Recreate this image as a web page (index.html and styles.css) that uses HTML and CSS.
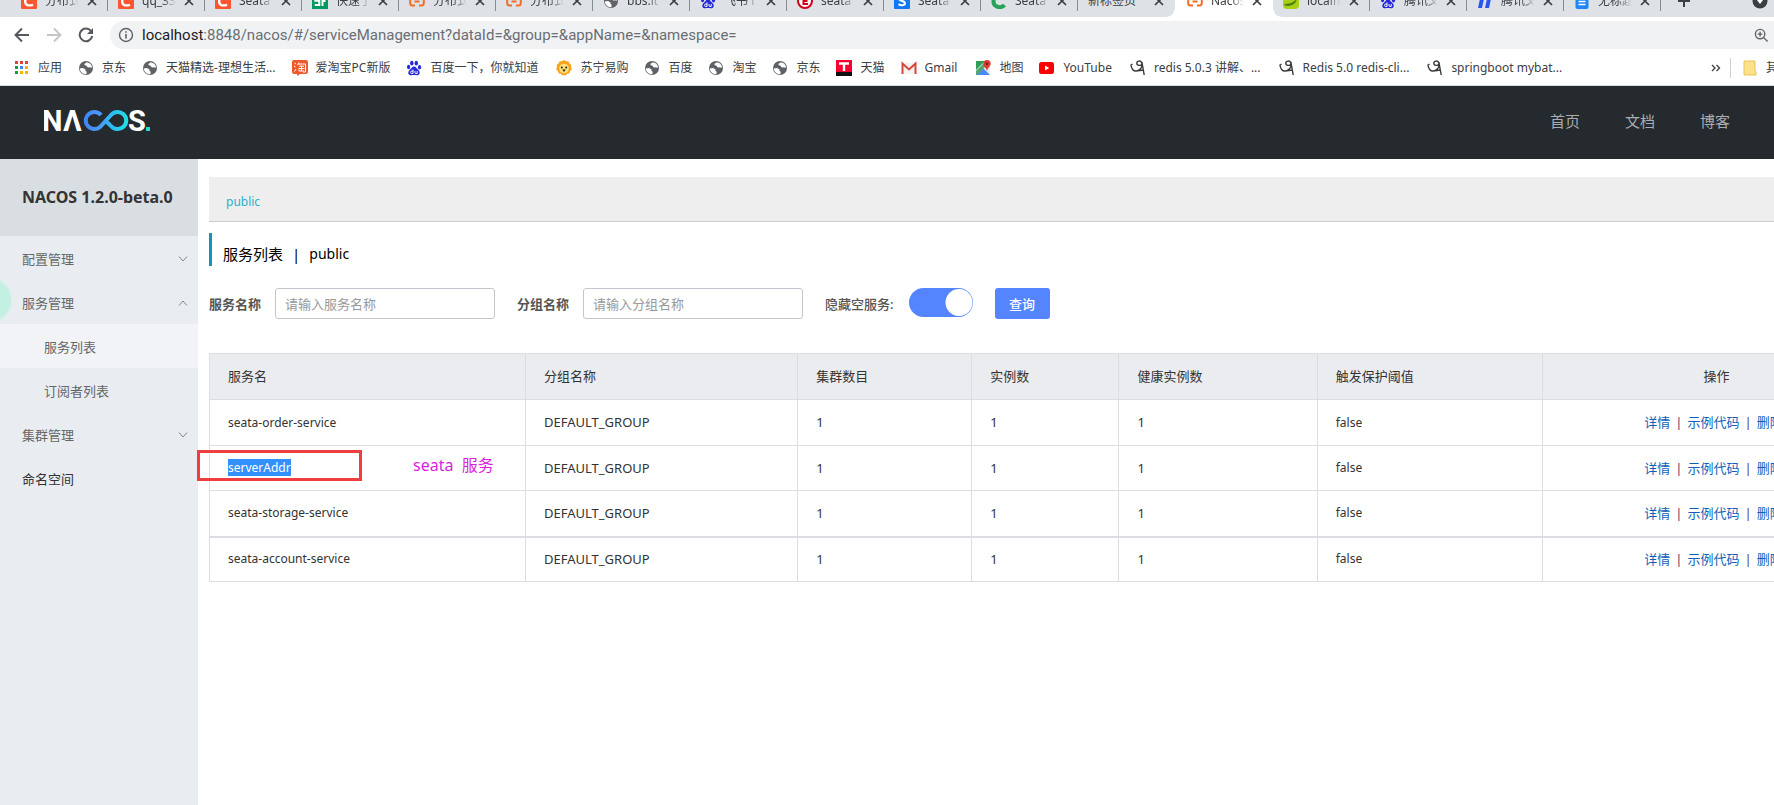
FILE: index.html
```html
<!DOCTYPE html>
<html lang="zh-CN">
<head>
<meta charset="utf-8">
<title>Nacos</title>
<link rel="stylesheet" href="styles.css">
</head>
<body>
<svg class="sprite" aria-hidden="true">
  <defs>
    <linearGradient id="loop" gradientUnits="userSpaceOnUse" x1="39" y1="0" x2="84" y2="0"><stop offset="0" stop-color="#3f83f3"/><stop offset="0.4" stop-color="#4a9bf8"/><stop offset="0.6" stop-color="#2fb8f2"/><stop offset="1" stop-color="#20e0e4"/></linearGradient>
  </defs>
  <symbol id="globe" viewBox="0 0 16 16"><circle cx="8" cy="8" r="7" fill="#5f6368"/><path d="M1.800 8.500 5 8l2.500 1.500V11l1.200.8-.4 2.400C5 14.500 2 12 1.800 8.500zM8.500 2.500c-1 .8-2.500 1-2 2.200.5 1 2.200.3 2.400 1.500.2 1 1.300 1.500 2.500 1l2.600.6C14 4.600 11.500 2.300 8.500 2.500z" fill="#fff"/></symbol>
  <symbol id="close" viewBox="0 0 10 10"><path d="M1 1l8 8M9 1l-8 8" stroke="#3c4043" stroke-width="1.700" fill="none"/></symbol>
  <symbol id="csdn" viewBox="0 0 16 16"><rect width="16" height="16" rx="1" fill="#fc5531"/><path d="M12 4.500C8 2.500 4.500 4 4.200 8c-.3 4.500 3.500 5 7.800 3.800" stroke="#fff" stroke-width="2.400" fill="none"/></symbol>
  <symbol id="sf" viewBox="0 0 16 16"><rect width="16" height="16" fill="#009a61"/><path d="M7.500 4.500H3.300v3.300h4v4.200H2.800M10.500 13V4h3.500M10 8h3.500" stroke="#fff" stroke-width="2" fill="none"/></symbol>
  <symbol id="nac" viewBox="0 0 16 16"><path d="M6 3H3.500Q1.200 3 1.200 5.500v4.500Q1.200 12.600 3.500 12.600H6M10 3h2.500q2.300 0 2.300 2.500v4.500q0 2.600-2.300 2.600H10M5.500 8.500h5" stroke="#f26f21" stroke-width="2" fill="none"/></symbol>
  <symbol id="paw" viewBox="0 0 16 16"><g fill="#2529d8"><ellipse cx="5.800" cy="3.200" rx="1.700" ry="2.400"/><ellipse cx="10.300" cy="3.200" rx="1.700" ry="2.400"/><ellipse cx="2.600" cy="7" rx="1.600" ry="2.200"/><ellipse cx="13.500" cy="7.200" rx="1.600" ry="2.200"/><path d="M8 6.500c2 0 2.600 2 4.400 3.600 2.200 2 1.400 5-.8 5.100-1.600.1-2.200-.2-3.600-.2s-2 .3-3.600.2c-2.200-.1-3-3.100-.8-5.100C5.400 8.500 6 6.500 8 6.500z"/></g><path d="M7 9.500v4H5.600q-1 0-1-1.200t1-1.200H7M9 11v1.500q0 1 1 1h1.200V11" stroke="#fff" fill="none"/></symbol>
  <symbol id="red" viewBox="0 0 16 16"><circle cx="8" cy="8" r="7" fill="#fff" stroke="#d0021b" stroke-width="2"/><path d="M11 5H6.500v6H11M6.500 8h4" stroke="#d0021b" stroke-width="2" fill="none"/></symbol>
  <symbol id="sea" viewBox="0 0 16 16"><rect width="16" height="16" rx="1" fill="#0f78f7"/><path d="M11.500 4.500C9 3 5 3.500 5 5.800c0 2.700 6 1.700 6 4.500 0 2.200-4 2.500-6.500.8" stroke="#fff" stroke-width="2" fill="none"/></symbol>
  <symbol id="grn" viewBox="0 0 16 16"><path d="M13 4C10 1 3 2 2.500 8s7.500 8 11 4" stroke="#27a35a" stroke-width="4" fill="none"/></symbol>
  <symbol id="leaf" viewBox="0 0 16 16"><rect width="16" height="16" rx="4" fill="#a8d014"/><path d="M1 11c5 0 10-1 13-6-.5 6-6 9-12 7.500z" fill="#4d7f14"/></symbol>
  <symbol id="bars" viewBox="0 0 16 16"><path d="M4 1h4L5 15H1zM11 1h4l-3 14H8z" fill="#2b55f0"/></symbol>
  <symbol id="doc" viewBox="0 0 16 16"><path d="M1.500 0h13v14a2 2 0 0 1-2 2h-9a2 2 0 0 1-2-2z" fill="#1e86f7"/><path d="M4.500 8.500h7M4.500 11.500h7" stroke="#fff" stroke-width="1.400"/></symbol>
  <symbol id="tao" viewBox="0 0 16 16"><path d="M2 0h12a2 2 0 0 1 2 2v10a2 2 0 0 1-2 2H8l-2.500 2L5 14H2a2 2 0 0 1-2-2V2a2 2 0 0 1 2-2z" fill="#ee5a2e"/><path d="M2.500 3l1.500 1M2 6l1.500 1M2.500 11.500 4 9M7 2.500 5.500 5M6 4h7.500v8H11M7 6.200h5M6.500 8.500h6M9.500 6v5M7 9.500V11h5" stroke="#fff" fill="none"/></symbol>
  <symbol id="lion" viewBox="0 0 16 16"><path d="M8 0l2 1.200 2.300 0 1 2.100L15.300 5l-.2 2.300.7 2.200-1.700 1.600-.6 2.200-2.300.5L9.500 15.500 8 15l-1.500.5-1.700-1.700-2.300-.5-.6-2.200L.2 9.500l.7-2.200L.7 5l2-1.700 1-2.100L6 1.200z" fill="#f9a21a"/><circle cx="8" cy="8.500" r="4.800" fill="#ffe07a"/><circle cx="5.800" cy="7.500" r="1" fill="#222"/><circle cx="10.200" cy="7.500" r="1" fill="#222"/><path d="M6.300 9.500h3.400L8 12z" fill="#222"/></symbol>
  <symbol id="tmall" viewBox="0 0 16 16"><rect width="16" height="16" fill="#f5002f"/><rect y="12" width="16" height="4" fill="#111"/><path d="M3 3.500h10M8 3.500V11" stroke="#fff" stroke-width="2.400"/></symbol>
  <symbol id="gmail" viewBox="0 0 16 16"><path d="M1 3h14v11H1z" fill="#f3f3f3"/><path d="M1.500 14V3.500L8 9.500l6.500-6V14" stroke="#d8463b" stroke-width="2" fill="none"/></symbol>
  <symbol id="map" viewBox="0 0 16 16"><rect x="1" y="1" width="14" height="14" rx="1" fill="#e8eaed"/><path d="M1 1h9L1 10z" fill="#2da15a"/><path d="M1 15 8 8l7 7z" fill="#4a8af4"/><path d="M1 11l8-8 2 3-9 9H1z" fill="#55a66a"/><path d="M12 0a3.700 3.700 0 0 1 3.700 3.700C15.700 6.300 12.600 8 12 11c-.6-3-3.700-4.700-3.700-7.300A3.700 3.700 0 0 1 12 0z" fill="#dc3e35"/><circle cx="12" cy="3.700" r="1.300" fill="#7b1b15"/></symbol>
  <symbol id="yt" viewBox="0 0 16 16"><rect x="0" y="2" width="15" height="12" rx="2.500" fill="#f00"/><path d="M6 5.500v5L10.300 8z" fill="#fff"/></symbol>
  <symbol id="loopy" viewBox="0 0 16 16"><path d="M1 4.500c0 4 2.500 7 5.500 6.500 4-.7 6.300-4.500 5.300-8C11 .3 6.800.5 6.800 3.200c0 2.500 4 3 5.400.6L14.200 15M.5 5.500 2.500 4M6 11l7.500-1" stroke="#3a3a3a" stroke-width="1.400" fill="none"/></symbol>
  <symbol id="down" viewBox="0 0 10 10"><path d="M1 2.500 5 7l4-4.500" stroke="#888" fill="none"/></symbol>
  <symbol id="up" viewBox="0 0 10 10"><path d="M1 7.500 5 3l4 4.500" stroke="#888" fill="none"/></symbol>
</svg>

<div class="browser">
  <div class="tabs">
    <div class="tab"><svg class="ico"><use href="#csdn"/></svg><span>分布式</span><svg class="x"><use href="#close"/></svg></div>
    <div class="tab"><svg class="ico"><use href="#csdn"/></svg><span>qq_33</span><svg class="x"><use href="#close"/></svg></div>
    <div class="tab"><svg class="ico"><use href="#csdn"/></svg><span>Seata</span><svg class="x"><use href="#close"/></svg></div>
    <div class="tab"><svg class="ico"><use href="#sf"/></svg><span>快速了</span><svg class="x"><use href="#close"/></svg></div>
    <div class="tab"><svg class="ico"><use href="#nac"/></svg><span>分布式</span><svg class="x"><use href="#close"/></svg></div>
    <div class="tab"><svg class="ico"><use href="#nac"/></svg><span>分布式</span><svg class="x"><use href="#close"/></svg></div>
    <div class="tab"><svg class="ico"><use href="#globe"/></svg><span>bbs.it</span><svg class="x"><use href="#close"/></svg></div>
    <div class="tab"><svg class="ico"><use href="#paw"/></svg><span>飞书 f</span><svg class="x"><use href="#close"/></svg></div>
    <div class="tab"><svg class="ico"><use href="#red"/></svg><span>seata</span><svg class="x"><use href="#close"/></svg></div>
    <div class="tab"><svg class="ico"><use href="#sea"/></svg><span>Seata</span><svg class="x"><use href="#close"/></svg></div>
    <div class="tab"><svg class="ico"><use href="#grn"/></svg><span>Seata</span><svg class="x"><use href="#close"/></svg></div>
    <div class="tab last"><span>新标签页</span><svg class="x"><use href="#close"/></svg></div>
    <div class="tab active"><svg class="ico"><use href="#nac"/></svg><span>Nacos</span><svg class="x"><use href="#close"/></svg></div>
    <div class="tab first"><svg class="ico"><use href="#leaf"/></svg><span>localh</span><svg class="x"><use href="#close"/></svg></div>
    <div class="tab"><svg class="ico"><use href="#paw"/></svg><span>腾讯文</span><svg class="x"><use href="#close"/></svg></div>
    <div class="tab"><svg class="ico"><use href="#bars"/></svg><span>腾讯文</span><svg class="x"><use href="#close"/></svg></div>
    <div class="tab"><svg class="ico"><use href="#doc"/></svg><span>无标题</span><svg class="x"><use href="#close"/></svg></div>
    <div class="tabend">
      <svg class="plus" viewBox="0 0 14 14"><path d="M7 1v12M1 7h12" stroke="#3c4043" stroke-width="2"/></svg>
      <svg class="badge" viewBox="0 0 16 16"><circle cx="8" cy="8" r="7.500" fill="#3c4043"/><path d="M4.500 6.500h7L8 11z" fill="#fff"/></svg>
    </div>
  </div>
  <div class="toolbar">
    <svg class="nav" viewBox="0 0 16 16"><path d="M15 8H2M8 1.500 1.500 8 8 14.500" stroke="#55595e" stroke-width="1.900" fill="none"/></svg>
    <svg class="nav" viewBox="0 0 16 16"><path d="M1 8h13M8 1.500 14.500 8 8 14.500" stroke="#c4c6c8" stroke-width="1.900" fill="none"/></svg>
    <svg class="nav" viewBox="0 0 16 16"><path d="M13.300 4.500A6.300 6.300 0 1 0 14.200 9" stroke="#55595e" stroke-width="2" fill="none"/><path d="M15 1v6H9z" fill="#55595e"/></svg>
    <div class="omnibox">
      <svg class="info" viewBox="0 0 16 16"><circle cx="8" cy="8" r="6.500" stroke="#5f6368" stroke-width="1.400" fill="none"/><path d="M8 7v4.500M8 4.200v1.600" stroke="#5f6368" stroke-width="1.600"/></svg>
      <span class="url"><b>localhost</b>:8848/nacos/#/serviceManagement?dataId=&amp;group=&amp;appName=&amp;namespace=</span>
      <svg class="mag" viewBox="0 0 16 16"><circle cx="6.500" cy="6.500" r="5" stroke="#5f6368" stroke-width="1.500" fill="none"/><path d="M10 10l4.500 4.500M4 6.500h5M6.500 4v5" stroke="#5f6368" stroke-width="1.500"/></svg>
    </div>
  </div>
  <nav class="marks">
    <a href="#"><svg class="ico" viewBox="0 0 16 16"><path fill="#db4437" d="M1 1h3v3H1zM6 1h3v3H6zM11 1h3v3h-3z"/><path fill="#0f9d58" d="M1 6h3v3H1zM1 11h3v3H1z"/><path fill="#4285f4" d="M6 6h3v3H6z"/><path fill="#f4b400" d="M11 6h3v3h-3zM6 11h3v3H6zM11 11h3v3h-3z"/></svg>应用</a>
    <a href="#"><svg class="ico"><use href="#globe"/></svg>京东</a>
    <a href="#"><svg class="ico"><use href="#globe"/></svg>天猫精选-理想生活...</a>
    <a href="#"><svg class="ico"><use href="#tao"/></svg>爱淘宝PC新版</a>
    <a class="lat" href="#"><svg class="ico"><use href="#paw"/></svg>百度一下，你就知道</a>
    <a href="#"><svg class="ico"><use href="#lion"/></svg>苏宁易购</a>
    <a href="#"><svg class="ico"><use href="#globe"/></svg>百度</a>
    <a href="#"><svg class="ico"><use href="#globe"/></svg>淘宝</a>
    <a href="#"><svg class="ico"><use href="#globe"/></svg>京东</a>
    <a href="#"><svg class="ico"><use href="#tmall"/></svg>天猫</a>
    <a class="lat" href="#"><svg class="ico"><use href="#gmail"/></svg>Gmail</a>
    <a href="#"><svg class="ico"><use href="#map"/></svg>地图</a>
    <a class="lat" href="#"><svg class="ico"><use href="#yt"/></svg>YouTube</a>
    <a class="lat" href="#"><svg class="ico"><use href="#loopy"/></svg>redis 5.0.3 讲解、...</a>
    <a class="lat" href="#"><svg class="ico"><use href="#loopy"/></svg>Redis 5.0 redis-cli...</a>
    <a class="lat" href="#"><svg class="ico"><use href="#loopy"/></svg>springboot mybat...</a>
    <div class="more">
      <svg class="chev" viewBox="0 0 10 10"><path d="M1 2 4 5 1 8M5.500 2l3 3-3 3" stroke="#444" stroke-width="1.400" fill="none"/></svg>
      <a class="folder" href="#"><svg class="ico" viewBox="0 0 16 16"><path d="M2 1h11v10l1 1v3H2z" fill="#fde08a" stroke="#e8c455"/></svg>其他书签</a>
    </div>
  </nav>
</div>

<header class="header">
  <svg class="logo" viewBox="0 0 110 26" role="img" aria-label="NACOS">
    <text class="lt" x="-2" y="23">N</text>
    <text class="lt" x="19" y="23">Λ</text>
    <path d="M57 7A8.600 8.600 0 1 0 56 19L67 7A8.600 8.600 0 1 1 67 18L61 12" fill="none" stroke="url(#loop)" stroke-width="4"/>
    <text class="lt" x="84" y="23">S</text>
    <path d="M102 19h4v4h-4z" fill="#1fe0d0"/>
  </svg>
  <nav class="top"><a href="#">首页</a><a href="#">文档</a><a href="#">博客</a></nav>
</header>

<div class="shell">
  <aside class="side">
    <h1 class="ver">NACOS 1.2.0-beta.0</h1>
    <nav class="menu">
      <button type="button">配置管理<svg class="arrow"><use href="#down"/></svg></button>
      <button type="button">服务管理<svg class="arrow"><use href="#up"/></svg></button>
      <a class="sub on" href="#">服务列表</a>
      <a class="sub" href="#">订阅者列表</a>
      <button type="button">集群管理<svg class="arrow"><use href="#down"/></svg></button>
      <a class="dark" href="#">命名空间</a>
    </nav>
    <div class="bubble"></div>
  </aside>
  <main class="main">
    <div class="ns"><a href="#">public</a></div>
    <h2 class="title"><span>服务列表</span><span>|</span><span class="en">public</span></h2>
    <form class="filter">
      <label for="svc">服务名称</label>
      <input class="box" id="svc" type="text" placeholder="请输入服务名称">
      <label for="grp">分组名称</label>
      <input class="box" id="grp" type="text" placeholder="请输入分组名称">
      <label for="hide">隐藏空服务:</label>
      <input class="switch" id="hide" type="checkbox" role="switch" checked>
      <button class="query" type="button">查询</button>
    </form>
    <table class="grid">
      <colgroup><col class="c1"><col class="c2"><col class="c3"><col class="c4"><col class="c5"><col class="c6"><col></colgroup>
      <thead><tr><th>服务名</th><th>分组名称</th><th>集群数目</th><th>实例数</th><th>健康实例数</th><th>触发保护阈值</th><th class="ops">操作</th></tr></thead>
      <tbody>
        <tr><td class="low">seata-order-service</td><td>DEFAULT_GROUP</td><td>1</td><td>1</td><td>1</td><td class="low">false</td><td class="ops"><a href="#">详情</a><i>|</i><a href="#">示例代码</a><i>|</i><a href="#">删除</a></td></tr>
        <tr><td class="low noted"><mark>serverAddr</mark><div class="frame"></div><div class="note">seata&nbsp; 服务</div></td><td>DEFAULT_GROUP</td><td>1</td><td>1</td><td>1</td><td class="low">false</td><td class="ops"><a href="#">详情</a><i>|</i><a href="#">示例代码</a><i>|</i><a href="#">删除</a></td></tr>
        <tr class="thick"><td class="low">seata-storage-service</td><td>DEFAULT_GROUP</td><td>1</td><td>1</td><td>1</td><td class="low">false</td><td class="ops"><a href="#">详情</a><i>|</i><a href="#">示例代码</a><i>|</i><a href="#">删除</a></td></tr>
        <tr><td class="low">seata-account-service</td><td>DEFAULT_GROUP</td><td>1</td><td>1</td><td>1</td><td class="low">false</td><td class="ops"><a href="#">详情</a><i>|</i><a href="#">示例代码</a><i>|</i><a href="#">删除</a></td></tr>
      </tbody>
    </table>
  </main>
</div>
</body>
</html>
```
FILE: styles.css
```css
* { box-sizing: border-box; }
body {
  margin: 0;
  min-height: 100vh;
  display: flex;
  flex-direction: column;
  overflow: hidden;
  background: #fff;
  color: #333;
  font: 13px/20px "Noto Sans", "Noto Sans CJK SC", sans-serif;
}
a { color: inherit; text-decoration: none; }
.sprite { position: absolute; width: 0; height: 0; }
.ico { width: 16px; height: 16px; flex: none; }

/* browser window */
.browser { font-size: 12px; overflow: hidden; }
.tabs {
  display: flex;
  align-items: flex-end;
  height: 17px;
  padding-left: 11px;
  background: #dee1e6;
  overflow: hidden;
}
.tab {
  flex: none;
  display: flex;
  align-items: center;
  gap: 8px;
  width: 97px;
  height: 32px;
  padding: 0 11px 0 10px;
  color: #3c4043;
  background: linear-gradient(#868b90, #868b90) right 6px / 1px 20px no-repeat;
}
.tab span {
  flex: 1;
  overflow: hidden;
  white-space: nowrap;
  mask-image: linear-gradient(90deg, #000 60%, transparent);
}
.tab .x { width: 10px; height: 10px; flex: none; }
.tab.active { width: 98px; padding-left: 12px; background: #fff; }
.tab.last { background: radial-gradient(circle at 0 0, #dee1e6 7px, #fff 8px) right bottom / 8px 8px no-repeat; }
.tab.first {
  background:
    radial-gradient(circle at 8px 0, #dee1e6 7px, #fff 8px) left bottom / 8px 8px no-repeat,
    linear-gradient(#868b90, #868b90) right 6px / 1px 20px no-repeat;
}
.tab.last span { mask-image: none; flex: 1 0 auto; }
.tabend { flex: 1; display: flex; align-items: center; justify-content: space-between; height: 32px; padding: 0 6px 0 16px; }
.plus { width: 14px; height: 14px; }
.badge { width: 16px; height: 16px; }
.toolbar { display: flex; align-items: center; gap: 16px; height: 36px; padding-left: 14px; }
.nav { width: 16px; height: 16px; flex: none; }
.omnibox {
  flex: 1;
  display: flex;
  align-items: center;
  gap: 8px;
  height: 28px;
  padding: 0 5px 0 8px;
  border-radius: 14px 0 0 14px;
  background: #f0f2f3;
  color: #6a6e73;
  font-family: Roboto, "Noto Sans", sans-serif;
  font-size: 15px;
}
.url { flex: 1; white-space: nowrap; }
.url b { font-weight: 400; color: #202124; }
.info { width: 16px; height: 16px; }
.mag { width: 15px; height: 15px; }
.marks {
  display: flex;
  align-items: center;
  gap: 16px;
  height: 33px;
  padding: 0 0 3px 14px;
  border-bottom: 1px solid #d8dadd;
  color: #3c4043;
  white-space: nowrap;
}
.marks a { display: flex; align-items: center; gap: 8px; flex: none; }
.marks .lat { margin-right: 2px; }
.more { flex: 1; display: flex; align-items: center; justify-content: flex-end; gap: 9px; width: 0; }
.chev { width: 10px; height: 10px; }
.marks .folder { width: 44px; padding-left: 11px; border-left: 1px solid #d0d0d0; }

/* console header */
.header {
  display: flex;
  align-items: center;
  justify-content: space-between;
  height: 73px;
  padding: 0 43px 3px 44px;
  background: #252a2f;
}
.logo { width: 110px; height: 26px; }
.lt { font: 700 29px Roboto, sans-serif; fill: #fff; }
.top { display: flex; gap: 44px; color: #a9acb0; font-size: 15px; }
.top a { min-width: 31px; }

/* console body; wider than the window, the table runs past its right edge */
.shell { flex: 1; display: flex; width: calc(100% + 117px); }
.side { position: relative; width: 198px; background: #e9edf1; overflow: hidden; }
.ver {
  margin: 0;
  height: 77px;
  padding-left: 22px;
  background: #d9dee3;
  font-size: 16px;
  line-height: 77px;
  white-space: nowrap;
}
.menu { display: flex; flex-direction: column; color: #666; }
.menu button, .menu a {
  display: flex;
  align-items: center;
  justify-content: space-between;
  height: 44px;
  padding: 2px 10px 0 22px;
  border: 0;
  background: none;
  color: inherit;
  font: inherit;
}
.menu .sub { padding-left: 44px; }
.menu .on { background: #f2f3f7; }
.menu .dark { color: #333; }
.arrow { width: 10px; height: 10px; }
.bubble {
  position: absolute;
  left: -33px;
  top: 119px;
  width: 44px;
  height: 44px;
  border-radius: 50%;
  background: #c4f0e4;
  box-shadow: 0 0 3px #c4f0e4;
}
.main { flex: 1; padding: 18px 0 0 11px; }
.ns {
  height: 45px;
  padding-left: 17px;
  border-bottom: 1px solid #ccc;
  background: #eee;
  color: #2db0cc;
  font-size: 12px;
  line-height: 49px;
}
.title {
  display: flex;
  gap: 9px;
  height: 33px;
  margin: 11px 0 22px;
  padding: 11px 0 0 11px;
  border-left: 3px solid #1296b8;
  color: #000;
  font-size: 15px;
  font-weight: 400;
}
.title .en { font-size: 14px; }
.filter { display: flex; align-items: center; }
.filter label { color: #555; font-weight: 700; }
.box {
  width: 220px;
  height: 31px;
  margin: 0 22px 0 14px;
  padding: 0 9px;
  border: 1px solid #c4c6cf;
  border-radius: 3px;
  font: inherit;
}
.box::placeholder { color: #999; }
.filter label[for="hide"] { font-weight: 500; }
.switch {
  appearance: none;
  width: 64px;
  height: 29px;
  margin: 0 22px 2px 15px;
  border-radius: 15px;
  background: radial-gradient(circle at 50px 50%, #fff 13px, #5584ff 14px);
}
.query {
  width: 55px;
  height: 31px;
  border: 0;
  border-radius: 3px;
  background: #5584ff;
  color: #fff;
  font: inherit;
  font-weight: 500;
}
.grid {
  width: 100%;
  margin-top: 34px;
  border-collapse: collapse;
  table-layout: fixed;
}
.c1 { width: 18.8%; }
.c2 { width: 16.2%; }
.c3 { width: 10.35%; }
.c4 { width: 8.75%; }
.c5 { width: 11.8%; }
.c6 { width: 13.4%; }
.grid th, .grid td {
  height: 45px;
  padding: 0 18px 1px;
  border: 1px solid #dcdee3;
  text-align: left;
  font-weight: 400;
}
.grid th { height: 46px; background: #ebecf0; }
.grid tbody tr:nth-child(odd) td { height: 46px; }
.grid .thick td { border-bottom-width: 2px; }
.grid .low { padding-bottom: 0; font-size: 12px; }
.grid .ops { text-align: center; }
.grid td.ops { padding-right: 24px; color: #0f5fb8; }
.ops i { margin: 0 5px; color: #55406a; font-style: normal; }
.noted { position: relative; }
mark { background: #3390ff; color: #fff; }
.frame {
  position: absolute;
  left: -13px;
  top: 4px;
  width: 165px;
  height: 31px;
  border: 3px solid #ef3e40;
}
.note {
  position: absolute;
  left: 203px;
  top: 9px;
  color: #d81fe0;
  font-size: 16px;
}
```
